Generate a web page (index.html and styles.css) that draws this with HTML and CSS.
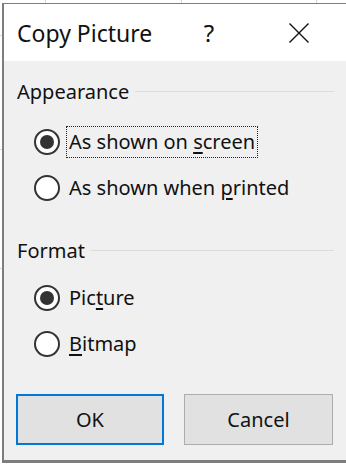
FILE: index.html
```html
<!DOCTYPE html>
<html>
<head>
<meta charset="utf-8">
<link rel="stylesheet" href="styles.css">
</head>
<body>
<div class="dialog">
  <div class="titlebar">
    <div class="title">Copy Picture</div>
    <div class="cap-btn help">?</div>
    <div class="cap-btn close">
      <svg width="20" height="20" viewBox="0 0 20 20"><path d="M0.5 0.5 L19.5 19.5 M19.5 0.5 L0.5 19.5" stroke="#111" stroke-width="1.4" fill="none"/></svg>
    </div>
  </div>
  <div class="content">
    <div class="group-head first"><span>Appearance</span><span class="rule"></span></div>
    <div class="radio-row"><span class="radio checked"></span><span class="label focus">As shown on <u>s</u>creen</span></div>
    <div class="radio-row"><span class="radio"></span><span class="label">As shown when <u>p</u>rinted</span></div>
    <div class="group-head second"><span>Format</span><span class="rule"></span></div>
    <div class="radio-row"><span class="radio checked"></span><span class="label">Pic<u>t</u>ure</span></div>
    <div class="radio-row"><span class="radio"></span><span class="label"><u>B</u>itmap</span></div>
    <div class="buttons">
      <div class="btn default">OK</div>
      <div class="btn">Cancel</div>
    </div>
  </div>
</div>
</body>
</html>
```

FILE: styles.css
```css
html, body {
  margin: 0;
  padding: 0;
}
body {
  width: 346px;
  height: 466px;
  overflow: hidden;
  background-color: #fff;
  background-image:
    linear-gradient(#d6d6d6, #d6d6d6),
    linear-gradient(#d6d6d6, #d6d6d6),
    linear-gradient(#d6d6d6, #d6d6d6),
    linear-gradient(#d6d6d6, #d6d6d6),
    linear-gradient(#d6d6d6, #d6d6d6),
    linear-gradient(#d6d6d6, #d6d6d6);
  background-size: 1px 4px, 1px 4px, 1px 4px, 3px 1px, 3px 1px, 3px 1px;
  background-position: 45px 0, 181px 0, 316px 0, 0 35px, 0 149px, 0 268px;
  background-repeat: no-repeat;
  font-family: "Noto Sans", "Open Sans", sans-serif;
  color: #111;
}
.dialog {
  margin: 3px 0 0 2px;
  width: 342px;
  border-left: 2px solid #7d7d7d;
  border-top: 1px solid #7d7d7d;
  border-bottom: 3px solid #7d7d7d;
  background: #f0f0f0;
}
.titlebar {
  height: 57px;
  background: #fff;
  display: flex;
  align-items: center;
  padding-left: 13px;
  padding-right: 2px;
}
.title {
  flex: 1;
  font-size: 23px;
  line-height: 30px;
}
.cap-btn {
  width: 90px;
  height: 57px;
  display: flex;
  align-items: center;
  justify-content: center;
}
.help {
  font-size: 24px;
  line-height: 30px;
}
.close svg {
  display: block;
}
.content {
  width: 317px;
  padding: 15px 0 15px 13px;
  font-size: 20px;
}
.group-head {
  height: 32px;
  display: flex;
  align-items: center;
  line-height: 32px;
}
.group-head.first {
  margin-bottom: 11px;
}
.group-head.second {
  margin-top: 24px;
  margin-bottom: 8px;
}
.rule {
  flex: 1;
  height: 1px;
  background: #dcdcdc;
  margin-left: 6px;
  margin-top: -1px;
}
.radio-row {
  height: 46px;
  display: flex;
  align-items: center;
  padding-left: 17px;
}
.radio {
  box-sizing: border-box;
  width: 26px;
  height: 26px;
  border: 2.5px solid #333;
  border-radius: 50%;
  background: #fff;
  display: flex;
  align-items: center;
  justify-content: center;
  margin-right: 6px;
}
.radio.checked::after {
  content: "";
  width: 14px;
  height: 14px;
  border-radius: 50%;
  background: #333;
}
.label {
  border: 1px dotted transparent;
  padding: 1px 2px;
  line-height: 28px;
}
.label.focus {
  border-color: #222;
}
u {
  text-decoration-thickness: 2px;
  text-underline-offset: 3px;
}
.buttons {
  margin-top: 27px;
  display: flex;
  gap: 20px;
}
.btn {
  box-sizing: border-box;
  height: 51px;
  width: 149px;
  background: #e1e1e1;
  border: 1px solid #adadad;
  display: flex;
  align-items: center;
  justify-content: center;
  font-size: 20px;
}
.btn.default {
  width: 148px;
  border: 2px solid #0078d7;
  margin-left: -1px;
}
```
